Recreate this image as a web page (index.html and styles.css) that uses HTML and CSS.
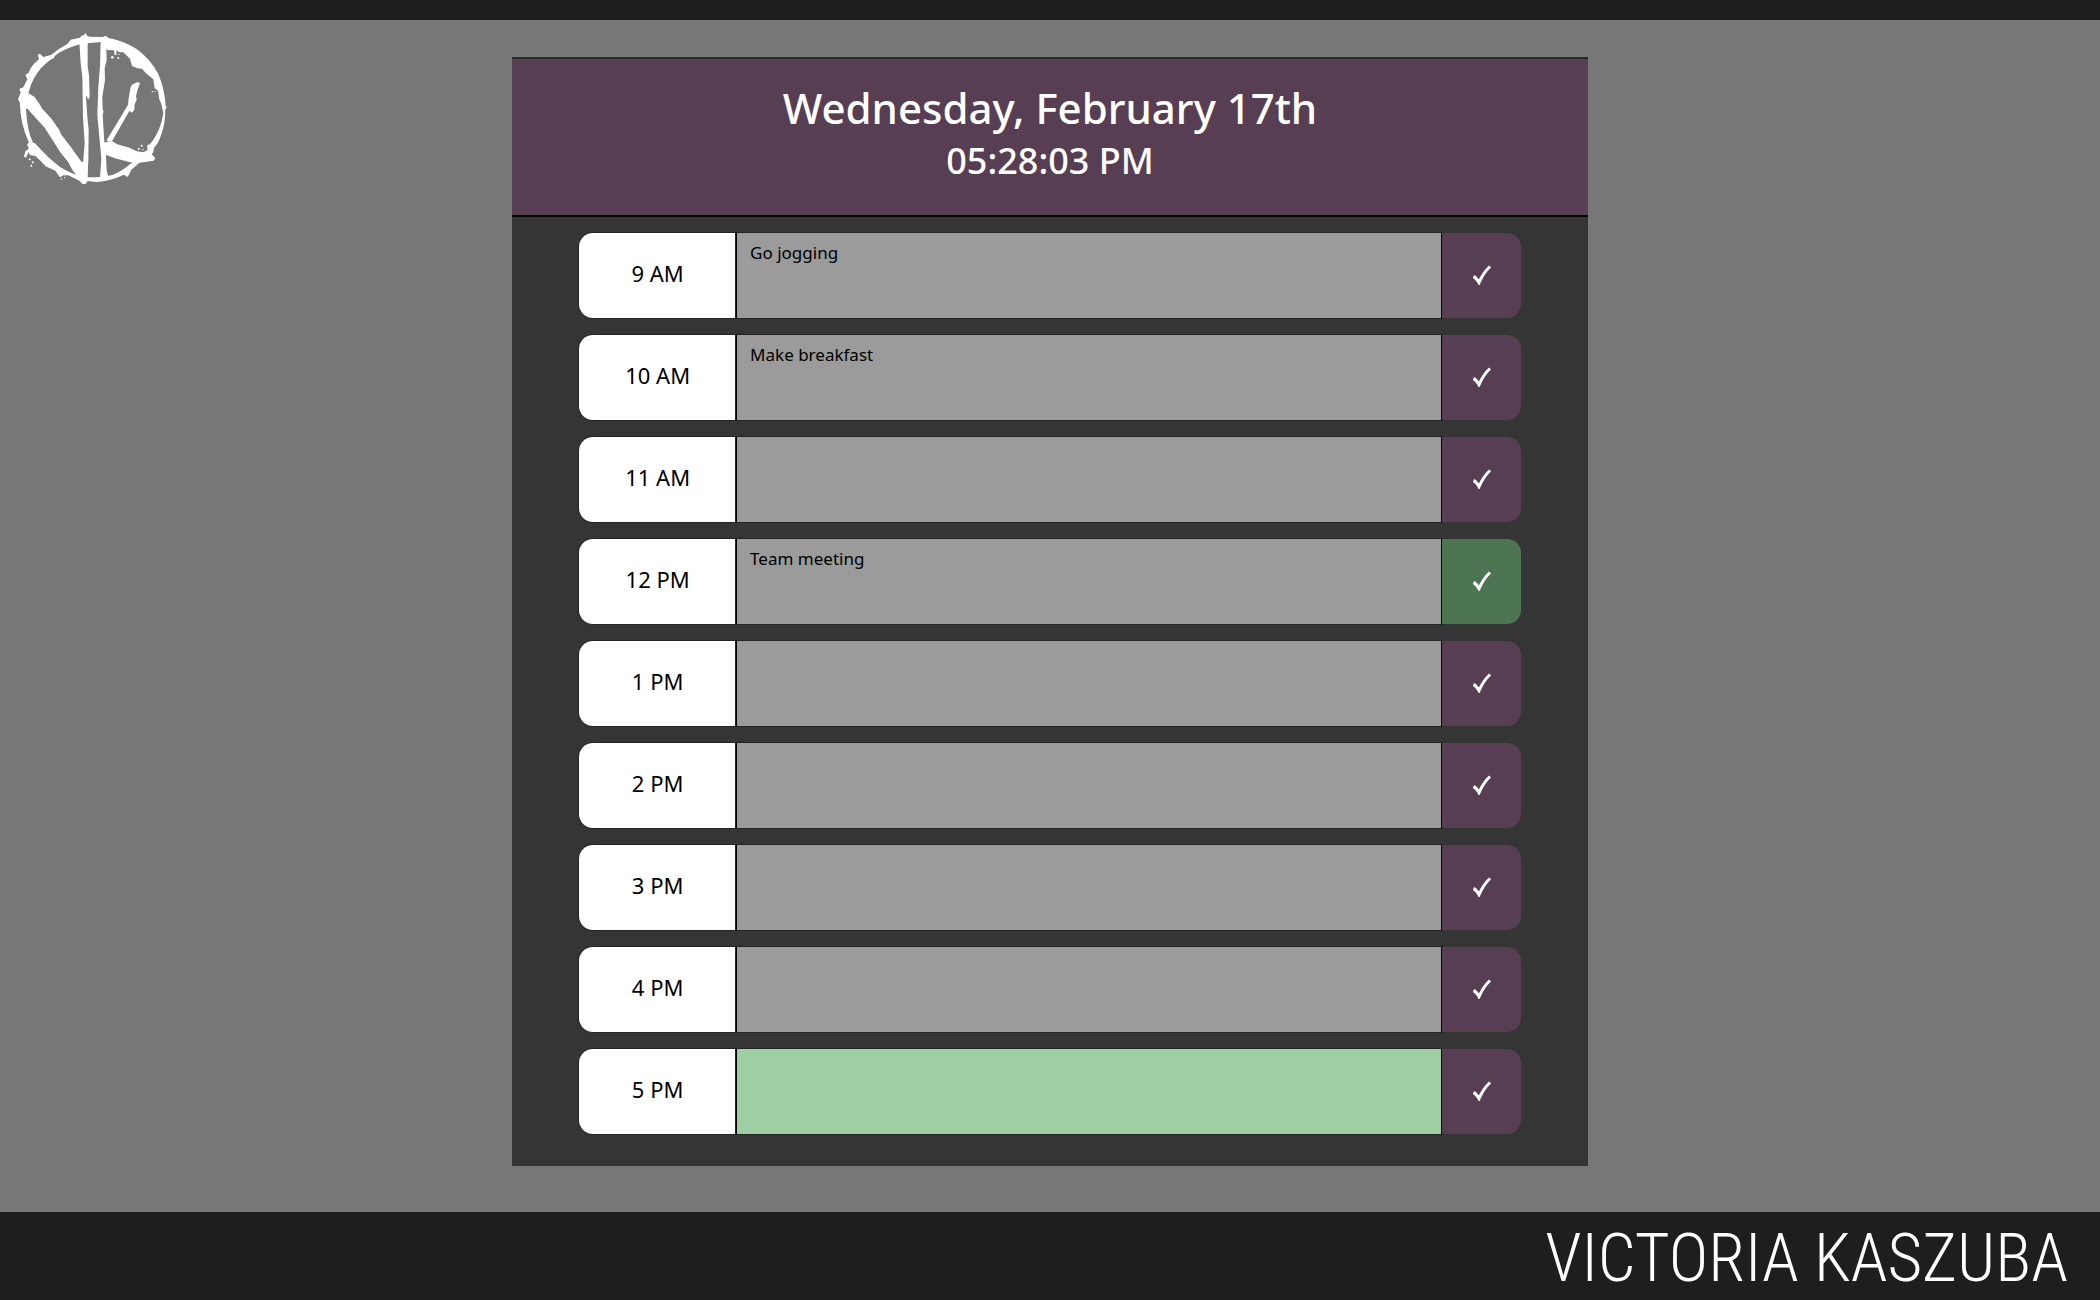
FILE: index.html
```html
<!DOCTYPE html>
<html lang="en">
<head>
<meta charset="utf-8">
<meta name="viewport" content="width=device-width, initial-scale=1">
<title>Work Day Scheduler</title>
<link rel="stylesheet" href="styles.css">
</head>
<body>
<svg class="sprite" aria-hidden="true">
  <symbol id="check" viewBox="0 0 20 20"><path d="M1.5 11.5 Q4.5 12.8 7 17.6 Q11.5 7.5 18 1.5" /></symbol>
</svg>
<main class="page">
  <div class="brand">
    <svg class="logo" viewBox="54 99 450 456" role="img" aria-label="VK">
      <path fill-rule="evenodd" d="M240 113 L246 106 L250 107 L256 99 L262 108 L270 110 L308 111 L317 107 L326 114 Q370 122 410 147 Q452 178 475 222 Q494 268 497 317 L500 322 L496 328 Q496 370 485 400 Q476 430 462 444 L460 456 L454 464 L466 475 L460 483 L442 480 L418 488 L394 509 L387 524 L382 531 L372 524 Q330 543 290 546 L262 543 L258 551 L248 552 L238 542 L205 526 L190 526 L180 532 L166 512 L137 499 L120 481 L106 468 L90 465 L86 456 L78 473 L72 470 L76 454 L86 446 L81 432 L87 428 Q60 370 60 310 L54 298 L62 278 L58 267 L70 262 L82 238 L76 225 L86 218 Q92 198 117 178 L113 164 L120 161 L130 171 L153 165 Q175 146 203 131 L212 119 Z
        M262 130 L302 126 L322 150 L342 151 L344 165 L349 166 L350 150 L356 156 L370 157 L390 176 L396 198 L412 205 L426 206 L438 220 L460 238 L464 264 L474 272 L478 298 L484 312 L490 340 Q482 395 450 433 L441 436 L443 450 L425 460 L396 488 Q350 526 322 528 L290 532 L262 532 Q218 525 179 500 Q145 475 105 430 L99 428 Q82 395 78 328 L86 276 Q96 235 124 203 Q150 178 162 174 L164 168 Q190 147 240 133 Z"/>
      <path d="M60 288 L74 276 L88 281 L104 291 L116 308 L128 328 L153 355 L178 390 L183 403 L212 440 L244 485 L262 486 L262 540 L254 550 L246 549 L216 508 L204 485 L182 458 L134 383 L83 327 L62 320 Z"/>
      <path d="M238 125 L263 124 L263 200 L267 225 L269 290 L264 300 L261 288 L258 290 L262 350 L266 390 L265 480 L262 545 L250 545 L250 480 L254 430 L249 350 L247 230 L242 190 Z"/>
      <path d="M302 120 L323 122 L319 148 L320 180 L314 205 L315 240 L307 290 L308 329 L311 334 L308 345 L313 425 L318 470 L320 510 L325 532 L300 535 L304 475 L297 400 L292 345 L295 260 L300 200 Z"/>
      <path d="M392 262 L396 254 L413 246 L420 249 L412 272 L408 288 L410 300 L404 312 L403 329 L396 338 L388 333 L336 424 L319 422 L360 355 L384 314 L386 294 Z"/>
      <path d="M310 428 L334 422 L352 433 L388 443 L410 454 L452 460 L466 475 L455 483 L418 488 L390 487 L345 475 L313 463 Z"/>
      <g><circle cx="337" cy="172" r="4"/><circle cx="355" cy="174" r="3"/><circle cx="357" cy="163" r="2"/><circle cx="457" cy="275" r="2"/><circle cx="465" cy="274" r="2"/><circle cx="89" cy="478" r="3"/><circle cx="98" cy="487" r="3"/><circle cx="94" cy="497" r="3"/><circle cx="184" cy="537" r="2"/><circle cx="194" cy="533" r="2"/><circle cx="416" cy="447" r="3"/><circle cx="425" cy="437" r="3"/><circle cx="429" cy="449" r="2"/></g>
    </svg>
  </div>
  <section class="planner">
    <header class="banner">
      <h1 class="date">Wednesday, February 17th</h1>
      <p class="clock">05:28:03 PM</p>
    </header>
    <div class="hours">
      <div class="row"><label class="time" for="h9">9 AM</label><textarea class="task" id="h9">Go jogging</textarea><button class="save" aria-label="Save 9 AM"><svg class="tick"><use href="#check"/></svg></button></div>
      <div class="row"><label class="time" for="h10">10 AM</label><textarea class="task" id="h10">Make breakfast</textarea><button class="save" aria-label="Save 10 AM"><svg class="tick"><use href="#check"/></svg></button></div>
      <div class="row"><label class="time" for="h11">11 AM</label><textarea class="task" id="h11"></textarea><button class="save" aria-label="Save 11 AM"><svg class="tick"><use href="#check"/></svg></button></div>
      <div class="row"><label class="time" for="h12">12 PM</label><textarea class="task" id="h12">Team meeting</textarea><button class="save active" aria-label="Save 12 PM"><svg class="tick"><use href="#check"/></svg></button></div>
      <div class="row"><label class="time" for="h13">1 PM</label><textarea class="task" id="h13"></textarea><button class="save" aria-label="Save 1 PM"><svg class="tick"><use href="#check"/></svg></button></div>
      <div class="row"><label class="time" for="h14">2 PM</label><textarea class="task" id="h14"></textarea><button class="save" aria-label="Save 2 PM"><svg class="tick"><use href="#check"/></svg></button></div>
      <div class="row"><label class="time" for="h15">3 PM</label><textarea class="task" id="h15"></textarea><button class="save" aria-label="Save 3 PM"><svg class="tick"><use href="#check"/></svg></button></div>
      <div class="row"><label class="time" for="h16">4 PM</label><textarea class="task" id="h16"></textarea><button class="save" aria-label="Save 4 PM"><svg class="tick"><use href="#check"/></svg></button></div>
      <div class="row"><label class="time" for="h17">5 PM</label><textarea class="task present" id="h17"></textarea><button class="save" aria-label="Save 5 PM"><svg class="tick"><use href="#check"/></svg></button></div>
    </div>
  </section>
</main>
<footer class="footer">VICTORIA KASZUBA</footer>
</body>
</html>
```
FILE: styles.css
```css
* { box-sizing: border-box; }

body {
  margin: 0;
  min-height: 100vh;
  display: flex;
  flex-direction: column;
  border-top: 20px solid #1e1e1e;
  background: #777;
  font-family: "Noto Sans", sans-serif;
}

.sprite { display: none; }

.page {
  flex: 1;
  display: grid;
  grid-template-columns: 20fr 42fr 20fr;
  align-items: start;
  padding-bottom: 46px;
}

.brand { padding: 13px 18px; }
.logo { display: block; width: 150px; height: 152px; fill: #fff; }

.planner { margin-top: 37px; background: #353535; }

.banner {
  padding: 23px 16px 32px;
  border-top: 2px solid #2a2a2a;
  border-bottom: 2px solid #000;
  background: #573e52;
  color: #fff;
  text-align: center;
}
.date { margin: 0 0 5px; font-size: 42px; line-height: 52px; font-weight: 500; }
.clock { margin: 0; font-size: 36px; line-height: 44px; font-weight: 500; }

.hours {
  display: flex;
  flex-direction: column;
  gap: 17px;
  padding: 16px 67px 32px;
}

.row {
  display: grid;
  grid-template-columns: 2fr 9fr 1fr;
  min-height: 85px;
}

.time {
  display: flex;
  align-items: center;
  justify-content: center;
  padding-bottom: 6px;
  border-radius: 14px 0 0 14px;
  background: #fff;
  color: #000;
  font-size: 22px;
}

.task {
  min-width: 0;
  height: 100%;
  margin: 0;
  padding: 8px 13px;
  border: solid #000;
  border-width: 0 1px;
  border-radius: 0;
  outline: 0;
  resize: none;
  background: #9b9b9b;
  color: #000;
  font: 17px/24px "Noto Sans", sans-serif;
}
.task.present { background: #9ecea3; }

.time, .task { box-shadow: 0 0 0 1px #242424; }

.save {
  display: flex;
  align-items: center;
  justify-content: center;
  padding: 0 0 2px;
  border: 0;
  border-radius: 0 14px 14px 0;
  background: #573e52;
  cursor: pointer;
}
.save.active { background: #4e7552; }
.tick { width: 20px; height: 20px; fill: none; stroke: #fff; stroke-width: 3; }

.footer {
  padding: 6px 32px 2px;
  background: #1e1e1e;
  color: #fff;
  font: 300 67px/80px "Roboto Condensed", Roboto, sans-serif;
  text-align: right;
}
```
